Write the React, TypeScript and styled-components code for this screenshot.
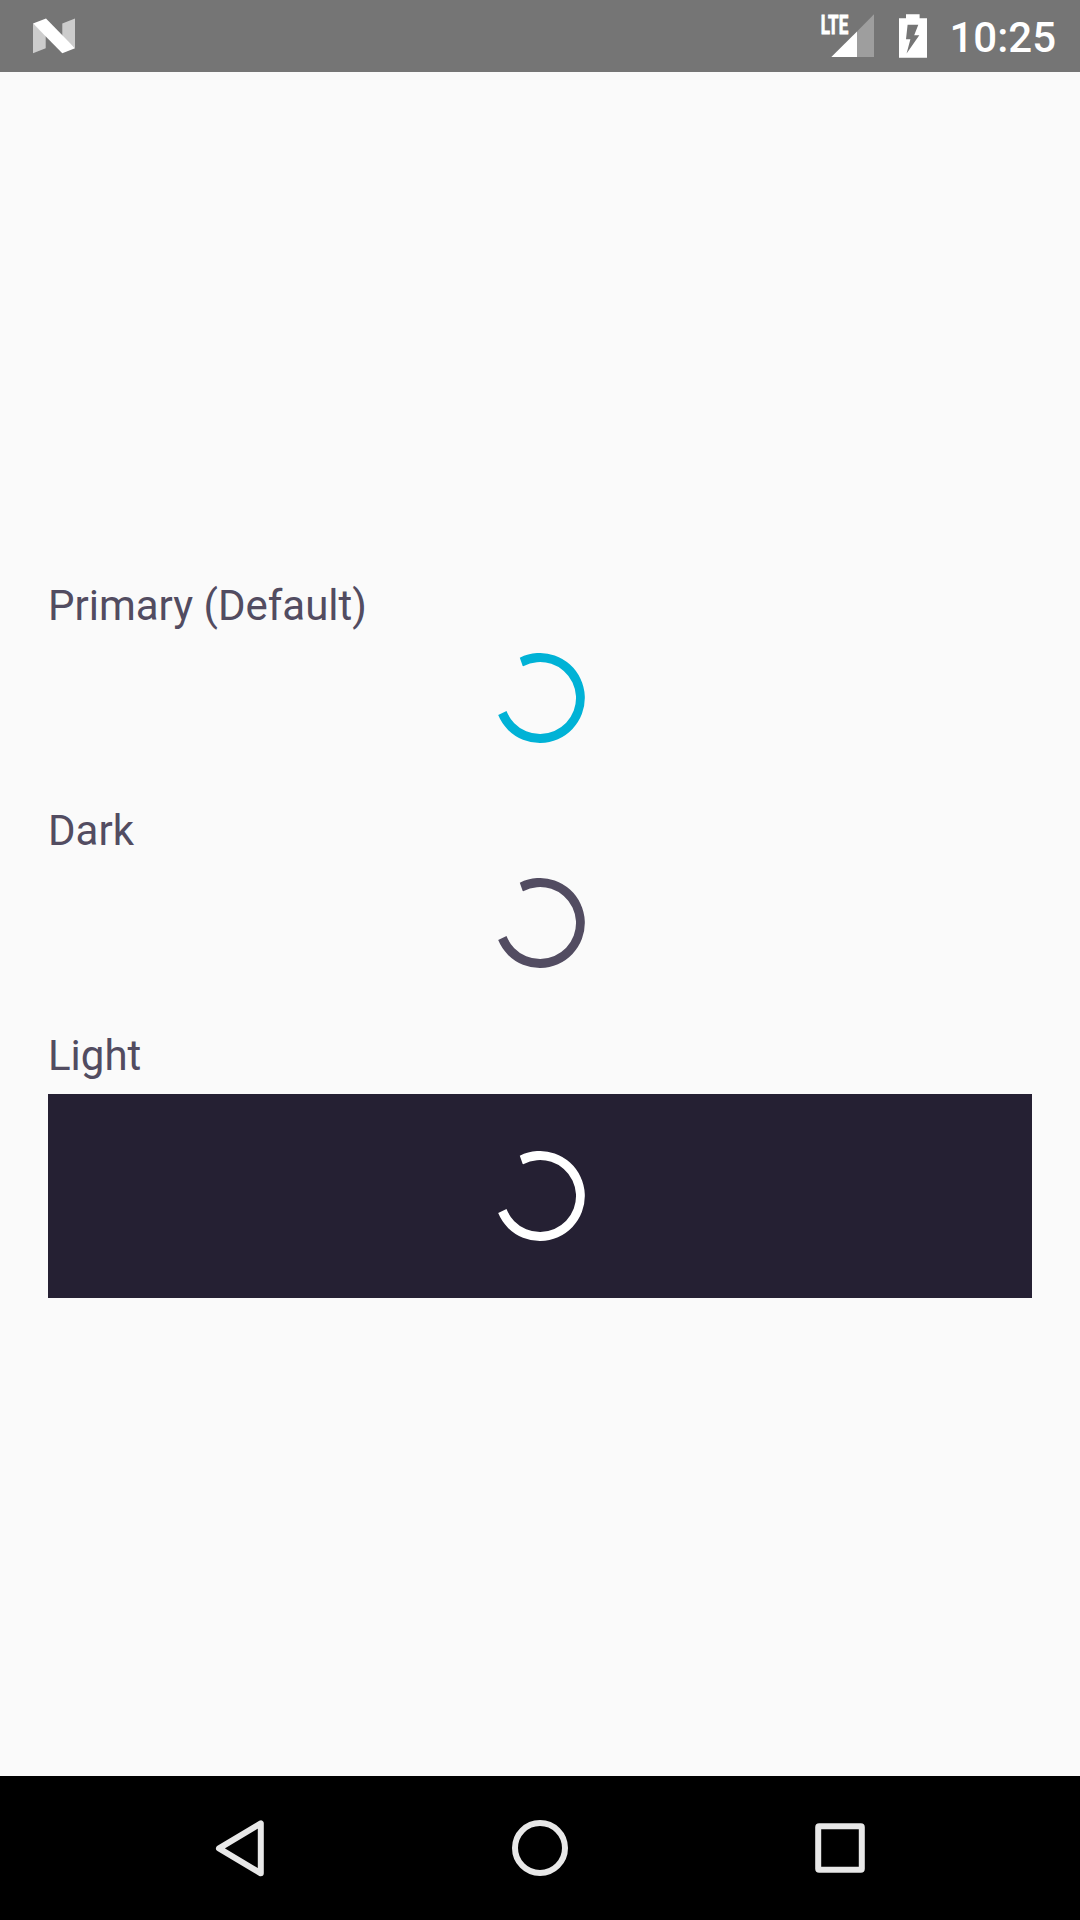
import React from "react";
import styled, { createGlobalStyle } from "styled-components";

const GlobalStyle = createGlobalStyle`
  body {
    margin: 0;
    background: #fafafa;
    font-family: Roboto, sans-serif;
  }
`;

const Screen = styled.div`
  width: 1080px;
  height: 1920px;
  display: flex;
  flex-direction: column;
  overflow: hidden;
  background: #fafafa;
`;

const StatusBar = styled.header`
  flex: none;
  height: 72px;
  box-sizing: border-box;
  padding: 0 24px 0 30px;
  display: flex;
  align-items: center;
  background: #757575;
  color: #fff;
`;

const StatusIcon = styled.svg<{ $gap?: number }>`
  flex: none;
  display: block;
  margin-right: ${(p) => p.$gap ?? 0}px;
`;

const Spacer = styled.div`
  flex: 1;
`;

const Clock = styled.time`
  padding-top: 4px;
  font-size: 42px;
  font-weight: 500;
  line-height: 50px;
  white-space: nowrap;
`;

const Content = styled.main`
  flex: 1;
  box-sizing: border-box;
  padding: 509px 48px 0;
  display: flex;
  flex-direction: column;
`;

const Section = styled.section`
  flex: none;
  height: 225px;
  display: flex;
  flex-direction: column;
`;

const Label = styled.div`
  height: 49px;
  margin-bottom: 14px;
  font-size: 42px;
  line-height: 49px;
  color: #524c61;
`;

const SpinnerBox = styled.div<{ $inverse?: boolean }>`
  flex: none;
  height: ${(p) => (p.$inverse ? 204 : 108)}px;
  display: flex;
  align-items: center;
  justify-content: center;
  background: ${(p) => (p.$inverse ? "#252033" : "transparent")};
`;

const SpinnerSvg = styled.svg<{ $color: string }>`
  display: block;
  width: 90px;
  height: 90px;
  fill: ${(p) => p.$color};
`;

const NavBar = styled.nav`
  flex: none;
  height: 144px;
  display: flex;
  align-items: center;
  justify-content: center;
  gap: 180px;
  background: #000;
`;

const NavButton = styled.button`
  width: 120px;
  height: 144px;
  padding: 0;
  border: 0;
  background: none;
`;

const NavIcon = styled.svg`
  display: block;
  fill: none;
  stroke: #e8e8e8;
  stroke-width: 6;
  stroke-linejoin: round;
`;

const Spinner = ({ color }: { color: string }) => (
  <SpinnerSvg $color={color} viewBox="-45 -45 90 90">
    <path d="M-20.2 -40.3A45 45 0 1 1 -41.8 17.1L-33.5 13.1A36 36 0 1 0 -16.8 -31.8L-17.3 -31.9Z" />
  </SpinnerSvg>
);

const variants = [
  { label: "Primary (Default)", color: "#00b2d6", inverse: false },
  { label: "Dark", color: "#524c61", inverse: false },
  { label: "Light", color: "#ffffff", inverse: true },
];

export default function App() {
  return (
    <>
      <GlobalStyle />
      <Screen>
        <StatusBar>
          <StatusIcon width="48" height="72" viewBox="30 0 48 72">
            <path fill="#cccccc" d="M33 23.5L45.7 35V48.3L33 53.3ZM62.3 23.5L75 18.5V48.3L62.3 37Z" />
            <path fill="#fff" d="M33 23.5L46 18.5L75 48.3L62.3 53.3Z" />
          </StatusIcon>
          <Spacer />
          <StatusIcon width="56" height="72" viewBox="820 0 56 72" $gap={23}>
            <path fill="#9e9e9e" d="M857 31.6L874 14.3V57H857Z" />
            <path fill="#fff" d="M831.3 57L857 31.6V57Z" />
            <text
              x="820.8"
              y="33.5"
              fill="#fff"
              stroke="#fff"
              strokeWidth="0.9"
              fontFamily="Roboto, sans-serif"
              fontSize="25.5"
              fontWeight="700"
              textLength="27.4"
              lengthAdjust="spacingAndGlyphs"
            >
              LTE
            </text>
          </StatusIcon>
          <StatusIcon width="28" height="72" viewBox="899 0 28 72" $gap={22}>
            <path
              fill="#fff"
              fillRule="evenodd"
              d="M906 14.2H919.6V18.3H927V57.8H899V18.3H906ZM907.6 24.7L906 39.2H910.4L906.6 53.5L919.3 35.3H914.2L918.3 24.7Z"
            />
          </StatusIcon>
          <Clock>10:25</Clock>
        </StatusBar>
        <Content>
          {variants.map((v) => (
            <Section key={v.label}>
              <Label>{v.label}</Label>
              <SpinnerBox $inverse={v.inverse}>
                <Spinner color={v.color} />
              </SpinnerBox>
            </Section>
          ))}
        </Content>
        <NavBar>
          <NavButton aria-label="Back">
            <NavIcon width="120" height="144" viewBox="180 1776 120 144">
              <path d="M219 1848.4L260.8 1823.3V1873.3Z" />
            </NavIcon>
          </NavButton>
          <NavButton aria-label="Home">
            <NavIcon width="120" height="144" viewBox="480 1776 120 144">
              <circle cx="540" cy="1848" r="25" />
            </NavIcon>
          </NavButton>
          <NavButton aria-label="Recents">
            <NavIcon width="120" height="144" viewBox="780 1776 120 144">
              <rect x="818.2" y="1826.2" width="43.6" height="43.6" rx="1" />
            </NavIcon>
          </NavButton>
        </NavBar>
      </Screen>
    </>
  );
}
